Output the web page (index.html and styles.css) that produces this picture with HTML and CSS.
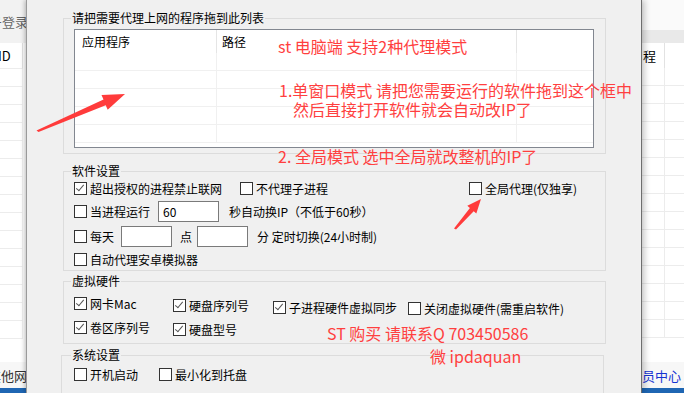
FILE: index.html
```html
<!DOCTYPE html>
<html lang="zh-CN">
<head>
    <meta charset="UTF-8">
    <title>代理设置</title>
    <link rel="stylesheet" href="styles.css">
</head>
<body>
    <!-- fenêtre principale derrière, côté gauche -->
    <div class="bg-side bg-left">
        <div class="bg-top"><span class="bg-login">号登录</span></div>
        <div class="bg-head"><span class="bg-id">ID</span></div>
        <div class="bg-rows">
            <div class="bg-row"></div><div class="bg-row"></div><div class="bg-row"></div>
            <div class="bg-row"></div><div class="bg-row"></div><div class="bg-row"></div>
            <div class="bg-row"></div><div class="bg-row"></div><div class="bg-row"></div>
            <div class="bg-row"></div><div class="bg-row"></div><div class="bg-row"></div>
            <div class="bg-row"></div><div class="bg-row"></div><div class="bg-row"></div>
        </div>
        <div class="bg-foot"><span class="bg-foot-text">其他网s</span></div>
        <div class="bg-bar"></div>
    </div>

    <div class="dialog">
        <fieldset class="group group-list">
            <legend>请把需要代理上网的程序拖到此列表</legend>
            <div class="listview">
                <div class="lv-head">
                    <div class="lv-col lv-col1">应用程序</div>
                    <div class="lv-col lv-col2">路径</div>
                    <div class="lv-col lv-col3"></div>
                </div>
                <div class="lv-row"><div class="lv-cell lv-col1"></div><div class="lv-cell lv-col2"></div><div class="lv-cell lv-col3"></div></div>
                <div class="lv-row"><div class="lv-cell lv-col1"></div><div class="lv-cell lv-col2"></div><div class="lv-cell lv-col3"></div></div>
                <div class="lv-row"><div class="lv-cell lv-col1"></div><div class="lv-cell lv-col2"></div><div class="lv-cell lv-col3"></div></div>
                <div class="lv-row"><div class="lv-cell lv-col1"></div><div class="lv-cell lv-col2"></div><div class="lv-cell lv-col3"></div></div>
                <div class="lv-row"><div class="lv-cell lv-col1"></div><div class="lv-cell lv-col2"></div><div class="lv-cell lv-col3"></div></div>
            </div>
        </fieldset>

        <fieldset class="group group-soft">
            <legend>软件设置</legend>
            <div class="row row1">
                <label class="chk w166"><span class="box on"></span>超出授权的进程禁止联网</label>
                <label class="chk w229"><span class="box"></span>不代理子进程</label>
                <label class="chk"><span class="box"></span>全局代理(仅独享)</label>
            </div>
            <div class="row row-input">
                <label class="chk w84"><span class="box"></span>当进程运行</label>
                <span class="field w60">60</span>
                <span class="txt ml10">秒自动换IP（不低于60秒）</span>
            </div>
            <div class="row row-input">
                <label class="chk w47"><span class="box"></span>每天</label>
                <span class="field w50"></span>
                <span class="txt point">点</span>
                <span class="field w50"></span>
                <span class="txt ml9">分 定时切换(24小时制)</span>
            </div>
            <div class="row row4">
                <label class="chk"><span class="box"></span>自动代理安卓模拟器</label>
            </div>
        </fieldset>

        <fieldset class="group group-hw">
            <legend>虚拟硬件</legend>
            <div class="row row-hw">
                <label class="chk w99"><span class="box on"></span>网卡Mac</label>
                <label class="chk w100 dy2"><span class="box on"></span>硬盘序列号</label>
                <label class="chk w135 dy4"><span class="box on"></span>子进程硬件虚拟同步</label>
                <label class="chk dy5"><span class="box"></span>关闭虚拟硬件(需重启软件)</label>
            </div>
            <div class="row row-hw second">
                <label class="chk w99"><span class="box on"></span>卷区序列号</label>
                <label class="chk dy2"><span class="box on"></span>硬盘型号</label>
            </div>
        </fieldset>

        <fieldset class="group group-sys">
            <legend>系统设置</legend>
            <div class="row row-sys">
                <label class="chk w85"><span class="box"></span>开机启动</label>
                <label class="chk"><span class="box"></span>最小化到托盘</label>
            </div>
        </fieldset>
    </div>

    <!-- fenêtre principale derrière, côté droit -->
    <div class="bg-side bg-right">
        <div class="bg-top-white"></div>
        <div class="bg-band"></div>
        <div class="bg-head"><span class="bg-cheng">程</span></div>
        <div class="bg-rows">
            <div class="bg-row"></div><div class="bg-row"></div><div class="bg-row"></div>
            <div class="bg-row"></div><div class="bg-row"></div><div class="bg-row"></div>
            <div class="bg-row"></div><div class="bg-row"></div><div class="bg-row"></div>
            <div class="bg-row"></div><div class="bg-row"></div><div class="bg-row"></div>
            <div class="bg-row"></div><div class="bg-row"></div><div class="bg-row"></div>
        </div>
        <div class="bg-foot"><span class="bg-link">员中心</span></div>
        <div class="bg-bar"></div>
    </div>

    <!-- annotations en rouge par-dessus la capture -->
    <div class="note n1">st 电脑端 支持2种代理模式</div>
    <div class="note n2">1.单窗口模式 请把您需要运行的软件拖到这个框中</div>
    <div class="note n3">然后直接打开软件就会自动改IP了</div>
    <div class="note n4">2. 全局模式 选中全局就改整机的IP了</div>
    <div class="note n5">ST 购买 请联系Q 703450586</div>
    <div class="note n6">微 ipdaquan</div>

    <svg class="arrows" width="684" height="393" viewBox="0 0 684 393">
        <polygon fill="#ff3b3b" points="36.5,130.5 38.5,132 105.7,105.2 107.7,109.8 125,94 101.5,95 103.5,99.6"/>
        <polygon fill="#ff3b3b" points="454,228.5 456,229.5 473.7,211.2 476.3,213.5 481,199 467.3,205.7 469.9,208"/>
    </svg>
</body>
</html>
```

FILE: styles.css
```css
body {
    margin: 0;
    width: 684px;
    height: 393px;
    overflow: hidden;
    position: relative;
    display: flex;
    font-family: "Noto Sans CJK SC", "Microsoft YaHei", sans-serif;
    font-size: 12px;
    color: #000;
    background-color: #fff;
}

/* fenêtre en arrière-plan */
.bg-side {
    display: flex;
    flex-direction: column;
    height: 393px;
    overflow: hidden;
    background-color: #fff;
}
.bg-left {
    width: 27px;
}
.bg-right {
    width: 42px;
}
.bg-top {
    height: 43px;
    background-color: #f2f2f2;
    display: flex;
    align-items: center;
    justify-content: flex-end;
    white-space: nowrap;
}
.bg-login {
    font-size: 13px;
    color: #666;
    margin-right: -1px;
}
.bg-head {
    height: 25px;
    display: flex;
    align-items: center;
    border-bottom: 1px solid #ececec;
    position: relative;
}
.bg-left .bg-head {
    border-right: 1px solid #e2e2e2;
    width: 22px;
    margin-right: auto;
    overflow: hidden;
}
.bg-id {
    font-size: 13px;
    margin-left: -2px;
}
.bg-rows {
    flex: 1;
    overflow: hidden;
}
.bg-row {
    height: 17px;
    border-bottom: 1px solid #ececec;
}
.bg-left .bg-row {
    border-right: 1px solid #f0f0f0;
    width: 22px;
}
.bg-right .bg-row {
    background: linear-gradient(to right, transparent 22px, #ececec 22px, #ececec 23px, transparent 23px);
}
.bg-foot {
    height: 26px;
    display: flex;
    align-items: center;
    white-space: nowrap;
    background-color: #f7f7f7;
    font-size: 13px;
}
.bg-left .bg-foot {
    color: #333;
}
.bg-foot-text {
    margin-left: -12px;
}
.bg-link {
    color: #1432d2;
    margin-left: 0;
}
.bg-bar {
    height: 5px;
    background-color: #1f66b3;
    flex-shrink: 0;
}
.bg-top-white {
    height: 30px;
    background-color: #fafafa;
}
.bg-band {
    height: 13px;
    background-color: #e9e9e9;
}
.bg-right .bg-head {
    border-bottom: none;
    background: linear-gradient(to right, transparent 22px, #e2e2e2 22px, #e2e2e2 23px, transparent 23px);
}
.bg-cheng {
    font-size: 13px;
    margin-left: 1px;
}

/* boîte de dialogue */
.dialog {
    width: 578px;
    height: 393px;
    flex-shrink: 0;
    background-color: #f0f0f0;
    padding-left: 36px;
    border-left: 1px solid #9a9a9a;
    border-right: 1px solid #6e6e6e;
    box-shadow: -2px 0 4px rgba(0,0,0,0.18), 3px 0 6px rgba(0,0,0,0.2);
    box-sizing: content-box;
    margin-left: -1px;
    position: relative;
    z-index: 1;
}
.group {
    width: 543px;
    box-sizing: border-box;
    margin: 0;
    border: 1px solid #dcdcdc;
    padding: 0 11px 0 10px;
}
.group legend {
    padding: 0 1px;
    margin-left: -3px;
    line-height: 14px;
    height: 14px;
}
.group-list {
    margin-top: 11px;
    padding-top: 4px;
    padding-bottom: 5px;
}
.group-soft {
    margin-top: 10px;
    padding-top: 2px;
    padding-bottom: 3px;
}
.group-hw {
    margin-top: 3px;
    padding-top: 7px;
    padding-bottom: 7px;
}
.group-sys {
    margin-top: 4px;
    margin-left: -2px;
    padding-top: 4px;
    padding-left: 12px;
    height: 60px;
}

/* liste des programmes */
.listview {
    width: 520px;
    height: 119px;
    box-sizing: border-box;
    border: 1px solid #828790;
    background-color: #fff;
    overflow: hidden;
}
.lv-head {
    display: flex;
    height: 23px;
    line-height: 23px;
}
.lv-col1 {
    width: 142px;
    border-right: 1px solid #e5e5e5;
    padding-left: 7px;
    box-sizing: border-box;
    flex-shrink: 0;
}
.lv-col2 {
    width: 300px;
    border-right: 1px solid #e5e5e5;
    padding-left: 5px;
    box-sizing: border-box;
    flex-shrink: 0;
}
.lv-col3 {
    flex: 1;
}
.lv-row {
    display: flex;
    height: 18px;
    box-sizing: border-box;
    border-bottom: 1px solid #f0f0f0;
}
.lv-cell.lv-col1,
.lv-cell.lv-col2 {
    border-right-color: #f0f0f0;
}

/* lignes d'options */
.row {
    display: flex;
    align-items: center;
    white-space: nowrap;
}
.row1 {
    height: 17px;
    margin-bottom: 4px;
}
.row-input {
    height: 21px;
    margin-bottom: 4px;
}
.row4 {
    height: 16px;
}
.row-hw {
    height: 17px;
    align-items: flex-start;
}
.row-hw.second {
    margin-top: 7px;
}
.row-sys {
    height: 17px;
    align-items: flex-start;
}
.chk {
    display: flex;
    align-items: center;
    height: 17px;
    line-height: 17px;
    flex-shrink: 0;
}
.box {
    width: 13px;
    height: 13px;
    box-sizing: border-box;
    border: 1px solid #333;
    background-color: #fff;
    margin-right: 3px;
    position: relative;
}
.box.on::after {
    content: "";
    position: absolute;
    left: 3px;
    top: 0px;
    width: 3px;
    height: 7px;
    border-right: 1.5px solid #555;
    border-bottom: 1.5px solid #555;
    transform: rotate(40deg);
}
.field {
    height: 21px;
    box-sizing: border-box;
    border: 1px solid #7a7a7a;
    background-color: #fff;
    line-height: 19px;
    padding-left: 4px;
    font-size: 12px;
    flex-shrink: 0;
}
.txt {
    line-height: 17px;
}
.point {
    margin-left: 8px;
    margin-right: 5px;
}
.w166 { width: 166px; }
.w229 { width: 229px; }
.w84 { width: 84px; }
.w47 { width: 47px; }
.w60 { width: 61px; }
.w50 { width: 51px; }
.w99 { width: 99px; }
.w100 { width: 100px; }
.w135 { width: 135px; }
.w85 { width: 85px; }
.ml10 { margin-left: 10px; }
.ml9 { margin-left: 9px; }
.dy2 { margin-top: 2px; }
.dy4 { margin-top: 4px; }
.dy5 { margin-top: 5px; }

/* annotations rouges */
.note {
    position: absolute;
    z-index: 3;
    font-size: 16px;
    line-height: 16px;
    color: #ff3f3f;
    white-space: nowrap;
}
.n1 { left: 278px; top: 38px; }
.n2 { left: 279px; top: 82px; }
.n3 { left: 293px; top: 101px; }
.n4 { left: 278px; top: 148px; }
.n5 { left: 327px; top: 325px; }
.n6 { left: 430px; top: 348px; }
.arrows {
    position: absolute;
    left: 0;
    top: 0;
    z-index: 3;
    pointer-events: none;
}
```
